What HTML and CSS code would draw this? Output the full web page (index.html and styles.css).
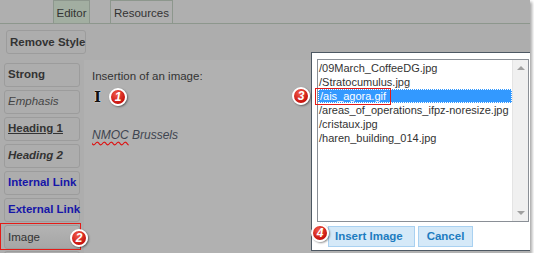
FILE: index.html
```html
<!DOCTYPE html>
<html lang="en">
<head>
    <meta charset="UTF-8">
    <title>Insert Image</title>
    <link rel="stylesheet" href="styles.css">
</head>
<body>
    <div class="shot">
        <div class="tabs">
            <div class="tab tab-active">Editor</div>
            <div class="tab tab-resources">Resources</div>
        </div>

        <div class="toolbar">
            <div class="btn btn-wide">Remove Style</div>
        </div>

        <div class="workspace">
            <!-- Style buttons -->
            <div class="sidebar">
                <div class="btn strong">Strong</div>
                <div class="btn em">Emphasis</div>
                <div class="btn h1">Heading 1</div>
                <div class="btn h2">Heading 2</div>
                <div class="btn link">Internal Link</div>
                <div class="btn link">External Link</div>
                <div class="marker">
                    <div class="btn plain image-btn">Image</div>
                    <span class="badge badge-2">2</span>
                </div>
                <div class="btn plain"></div>
            </div>

            <!-- Editor text -->
            <div class="panel">
                <p class="intro">Insertion of an image:</p>
                <div class="cursor-row">
                    <span class="ibeam">I</span>
                    <span class="badge">1</span>
                </div>
                <p class="sample"><span class="typo">NMOC</span> Brussels</p>
            </div>
        </div>

        <!-- Image picker dialog -->
        <div class="dialog">
            <div class="listbox">
                <ul class="files">
                    <li>/09March_CoffeeDG.jpg</li>
                    <li>/Stratocumulus.jpg</li>
                    <li class="selected"><span class="marked-file">/ais_agora.gif</span><span class="badge badge-3">3</span></li>
                    <li>/areas_of_operations_ifpz-noresize.jpg</li>
                    <li>/cristaux.jpg</li>
                    <li>/haren_building_014.jpg</li>
                </ul>
                <div class="scrollbar">
                    <span class="arrow arrow-up"></span>
                    <span class="arrow arrow-down"></span>
                </div>
            </div>
            <div class="actions">
                <span class="badge badge-4">4</span>
                <div class="action">Insert Image</div>
                <div class="action">Cancel</div>
            </div>
        </div>
    </div>
</body>
</html>
```

FILE: styles.css
```css
* {
    box-sizing: border-box;
}

body {
    margin: 0;
    background: #fff;
    font-family: 'Liberation Sans', Arial, sans-serif;
    font-size: 12px;
    color: #333;
}

.shot {
    position: relative;
    width: 530px;
    height: 253px;
    background: #adadad;
    box-shadow: 2px 2px 3px rgba(0, 0, 0, 0.35);
    overflow: hidden;
}

/* Tabs */
.tabs {
    display: flex;
    gap: 20px;
    height: 24px;
    padding-left: 53px;
    border-bottom: 1px solid #8d978d;
    background: #afafaf;
}

.tab {
    width: 37px;
    padding-top: 6px;
    border: 1px solid #8d978d;
    border-bottom: none;
    color: #333;
    font-size: 11.5px;
    text-align: center;
}

.tab-active {
    background: #a2aea1;
}

.tab-resources {
    width: 63px;
}

/* Buttons */
.toolbar {
    padding: 6px 0 0 6px;
    height: 36px;
}

.btn {
    height: 24px;
    padding: 4px 3px 0;
    border: 1px solid #9c9c9c;
    border-radius: 3px;
    background: #adadad;
    font-weight: bold;
    font-size: 11.5px;
    color: #333;
    white-space: nowrap;
}

.btn-wide {
    width: 80px;
    padding-top: 5px;
}

.workspace {
    display: flex;
}

.sidebar {
    width: 84px;
    padding: 3px 0 0 4px;
    display: flex;
    flex-direction: column;
    gap: 3px;
}

.sidebar .btn {
    width: 76px;
}

.em {
    font-weight: normal;
    font-style: italic;
    color: #444;
}

.h1 {
    text-decoration: underline;
}

.h2 {
    font-style: italic;
}

.link {
    color: #1616a8;
}

.plain {
    font-weight: normal;
}

.marker {
    position: relative;
    width: 81px;
    margin: -2px 0 -2px -4px;
    padding: 1px 0 0 3px;
    border: 1px solid #e41b17;
}

.sidebar .image-btn {
    padding: 5px 0 0 3px;
    background: linear-gradient(#b3b3b3, #a6a6a6);
}

/* Editor text */
.panel {
    flex: 1;
    height: 200px;
    background: #b1b1b1;
    padding: 10px 8px;
    color: #333;
}

.intro {
    margin: 0;
    font-size: 11.5px;
}

.cursor-row {
    display: flex;
    align-items: center;
    gap: 8px;
    height: 22px;
    margin-top: 4px;
}

.ibeam {
    font-family: 'DejaVu Serif', serif;
    font-weight: bold;
    font-size: 15px;
    color: #111;
    text-shadow: 0 0 1px #fff, 0 0 1px #fff;
    margin-left: 2px;
}

.sample {
    margin: 20px 0 0;
    font-style: italic;
    color: #3f4550;
}

.typo {
    text-decoration: underline wavy #d11;
    text-underline-offset: 2px;
}

/* Badges */
.badge {
    display: inline-flex;
    justify-content: center;
    align-items: center;
    width: 18px;
    height: 18px;
    border-radius: 50%;
    border: 2px solid #fff;
    background: radial-gradient(circle at 40% 30%, #f25a4a, #c8140e 70%);
    color: #fff;
    font-weight: bold;
    font-size: 12px;
    font-style: italic;
    box-shadow: 1px 1px 2px rgba(0, 0, 0, 0.45);
}

.badge-2 {
    position: absolute;
    left: 69px;
    top: 5px;
}

.badge-3 {
    position: absolute;
    left: -26px;
    top: -2px;
}

.badge-4 {
    position: absolute;
    left: -6px;
    top: 2px;
}

/* Dialog */
.dialog {
    position: absolute;
    left: 311px;
    top: 52px;
    width: 222px;
    height: 199px;
    background: #fff;
    border: 1px solid #4d5863;
    padding: 6px 0 0 5px;
}

.listbox {
    display: flex;
    width: 212px;
    height: 163px;
    border: 1px solid #8a8f96;
}

.files {
    flex: 1;
    margin: 0;
    padding: 1px 0 0;
    list-style: none;
    font-size: 11px;
    color: #333;
}

.files li {
    position: relative;
    height: 14px;
    line-height: 14px;
    padding-left: 1px;
    white-space: nowrap;
}

.files .selected {
    background: #3399ff;
    color: #fff;
    outline: 1px dotted #fff;
    outline-offset: -1px;
}

.marked-file {
    display: inline-block;
    margin: -2px 0 0 -4px;
    padding: 0 4px 1px;
    border: 1px solid #e41b17;
    line-height: 14px;
}

.scrollbar {
    position: relative;
    width: 16px;
    background: #f0f0f0;
    border-left: 1px solid #e4e4e4;
}

.arrow {
    position: absolute;
    left: 4px;
    width: 0;
    height: 0;
    border-left: 4px solid transparent;
    border-right: 4px solid transparent;
}

.arrow-up {
    top: 6px;
    border-bottom: 4px solid #a0a0a0;
}

.arrow-down {
    bottom: 6px;
    border-top: 4px solid #a0a0a0;
}

.actions {
    position: relative;
    display: flex;
    gap: 3px;
    padding: 4px 0 0 11px;
}

.action {
    height: 21px;
    padding: 3px 6px 0;
    background: #d5e9f8;
    border: 1px solid #a9d1f1;
    color: #1d7cc0;
    font-size: 11.5px;
    font-weight: bold;
}

.action:first-of-type {
    width: 87px;
}

.action:last-child {
    width: 55px;
    text-align: center;
}
```
